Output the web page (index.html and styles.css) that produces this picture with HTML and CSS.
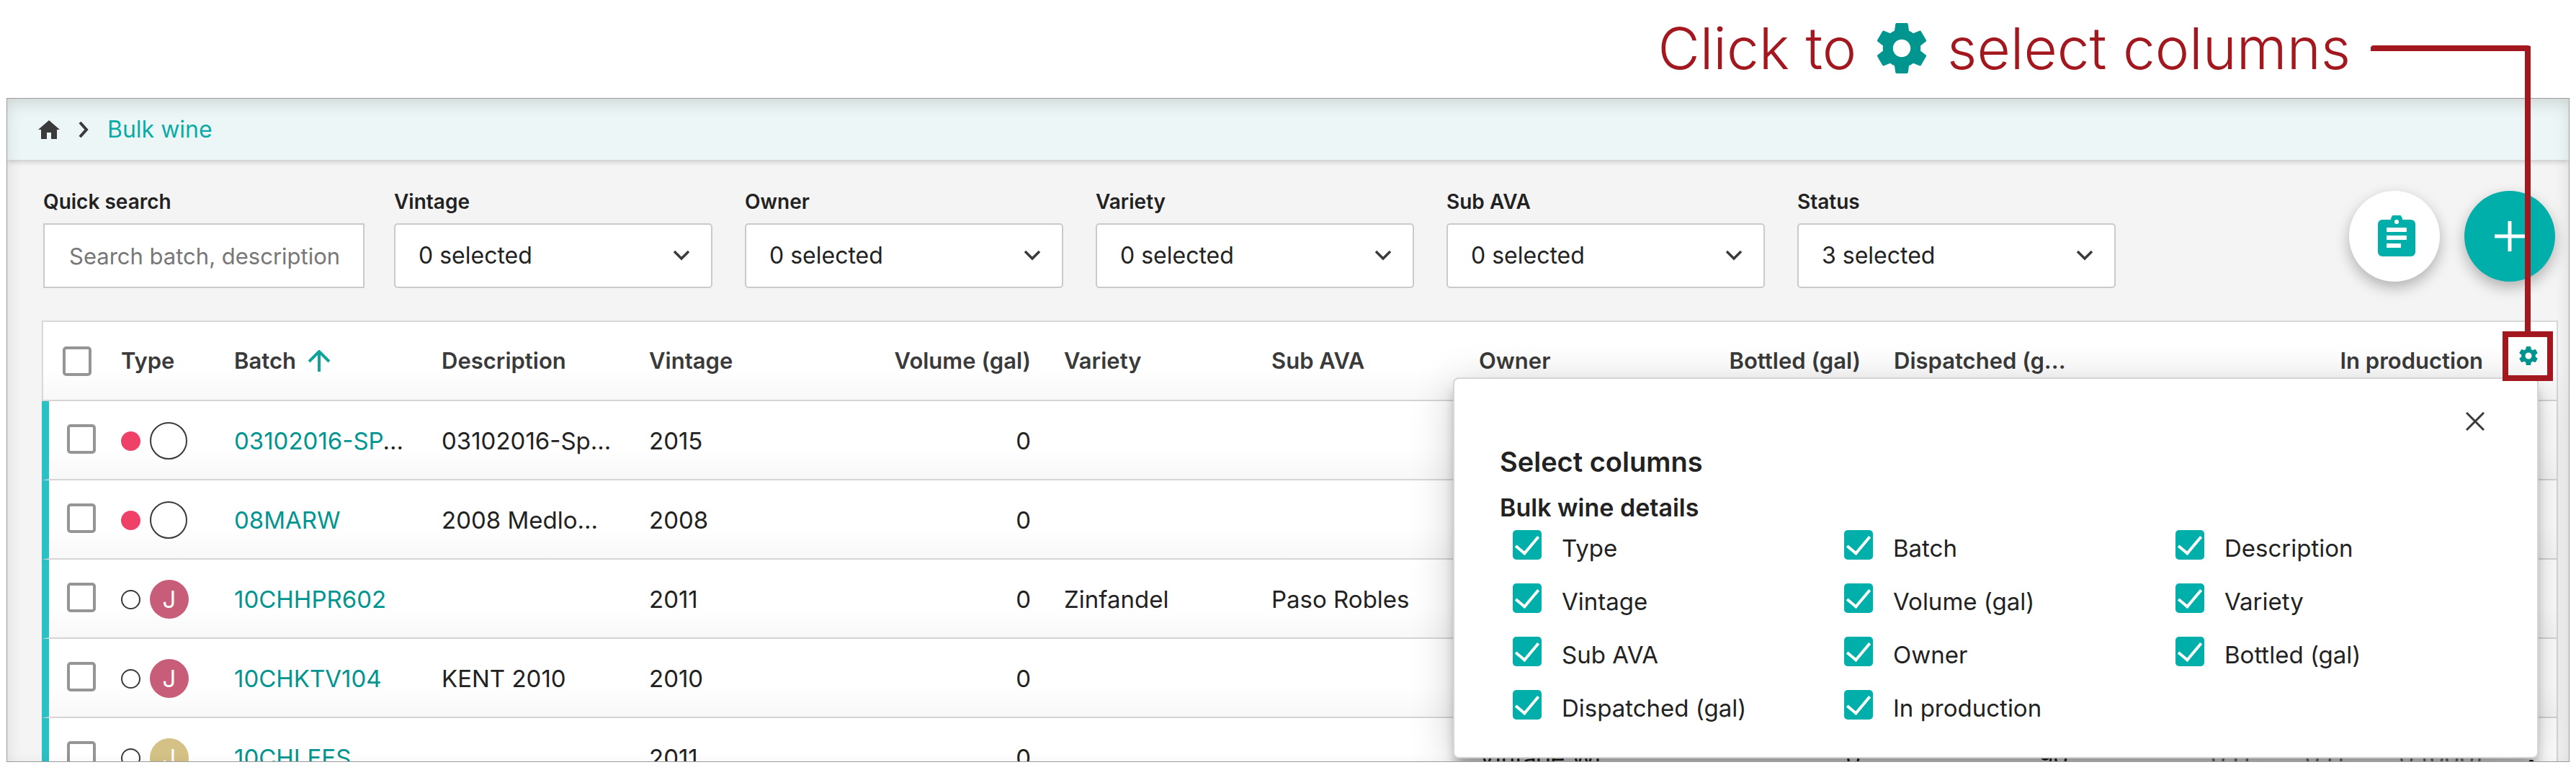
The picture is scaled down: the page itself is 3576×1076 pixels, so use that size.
FILE: index.html
```html
<!DOCTYPE html>
<html lang="en">
<head>
<meta charset="utf-8">
<title>Bulk wine</title>
<link rel="stylesheet" href="styles.css">
</head>
<body>
<svg class="defs" aria-hidden="true">
  <symbol id="gear" viewBox="2 2 20 20"><path d="M19.43 12.98c.04-.32.07-.64.07-.98s-.03-.66-.07-.98l2.11-1.65c.19-.15.24-.42.12-.64l-2-3.46c-.12-.22-.39-.3-.61-.22l-2.49 1c-.52-.4-1.08-.73-1.69-.98l-.38-2.65C14.46 2.18 14.25 2 14 2h-4c-.25 0-.46.18-.49.42l-.38 2.65c-.61.25-1.17.59-1.69.98l-2.49-1c-.23-.09-.49 0-.61.22l-2 3.46c-.13.22-.07.49.12.64l2.11 1.65c-.04.32-.07.65-.07.98s.03.66.07.98l-2.11 1.65c-.19.15-.24.42-.12.64l2 3.46c.12.22.39.3.61.22l2.49-1c.52.4 1.08.73 1.69.98l.38 2.65c.03.24.24.42.49.42h4c.25 0 .46-.18.49-.42l.38-2.65c.61-.25 1.17-.59 1.69-.98l2.49 1c.23.09.49 0 .61-.22l2-3.46c.12-.22.07-.49-.12-.64l-2.11-1.65zM12 15.5c-1.93 0-3.5-1.57-3.5-3.5s1.57-3.5 3.5-3.5 3.5 1.57 3.5 3.5-1.57 3.5-3.5 3.5z"/></symbol>
  <symbol id="down" viewBox="0 0 24 16"><path d="M2 2l10 10L22 2" fill="none" stroke="currentColor" stroke-width="3.5"/></symbol>
</svg>

<aside class="callout">
  <p class="callout-text">Click to <svg class="callout-gear" role="img" aria-label="settings"><use href="#gear"/></svg> select columns</p>
  <span class="callout-line"></span>
  <span class="callout-drop"></span>
  <span class="callout-box"></span>
</aside>

<main class="frame">
  <nav class="crumbs" aria-label="Breadcrumb">
    <a href="#" aria-label="Home"><svg width="30" height="26" viewBox="0 0 30 26"><path d="M15 0L0 13h4v13h8v-9h6v9h8V13h4z" fill="#3a3a3a"/></svg></a>
    <svg width="14" height="22" viewBox="0 0 14 22"><path d="M2 1l9 10-9 10" fill="none" stroke="#3a3a3a" stroke-width="4"/></svg>
    <a class="current" href="#">Bulk wine</a>
  </nav>

  <section class="filters">
    <div class="field search"><label for="q">Quick search</label><input id="q" type="text" placeholder="Search batch, description"></div>
    <div class="field"><label for="f1">Vintage</label><div class="pick"><select id="f1"><option>0 selected</option></select><svg><use href="#down"/></svg></div></div>
    <div class="field"><label for="f2">Owner</label><div class="pick"><select id="f2"><option>0 selected</option></select><svg><use href="#down"/></svg></div></div>
    <div class="field"><label for="f3">Variety</label><div class="pick"><select id="f3"><option>0 selected</option></select><svg><use href="#down"/></svg></div></div>
    <div class="field"><label for="f4">Sub AVA</label><div class="pick"><select id="f4"><option>0 selected</option></select><svg><use href="#down"/></svg></div></div>
    <div class="field"><label for="f5">Status</label><div class="pick"><select id="f5"><option>3 selected</option></select><svg><use href="#down"/></svg></div></div>
    <div class="actions">
      <button class="round light" type="button" aria-label="Tasks"><svg width="52" height="58" viewBox="0 0 52 58"><path fill="#00aeaa" fill-rule="evenodd" d="M6 6h12a8 8 0 0 1 16 0h12a6 6 0 0 1 6 6v39a6 6 0 0 1-6 6H6a6 6 0 0 1-6-6V12a6 6 0 0 1 6-6zM26 6a3 3 0 1 0 0 6 3 3 0 0 0 0-6zM12 17v6h28v-6zM12 28v6h28v-6zM12 39v6h20v-6z"/></svg></button>
      <button class="round teal" type="button" aria-label="Add"><svg width="44" height="44" viewBox="0 0 44 44"><path d="M22 1v42M1 22h42" stroke="#fff" stroke-width="5"/></svg></button>
    </div>
  </section>

  <section class="grid">
    <table>
      <colgroup><col class="c-check"><col class="c-type"><col class="c"><col class="c"><col class="c"><col class="c"><col class="c"><col class="c"><col class="c"><col class="c"><col class="c"><col class="c-prod"><col class="c-gear"></colgroup>
      <thead><tr>
        <th><input type="checkbox" aria-label="Select all"></th><th>Type</th>
        <th><span class="sort">Batch <svg width="32" height="30" viewBox="0 0 32 30"><path d="M16 30V3M2 16L16 2l14 14" fill="none" stroke="#0fa39b" stroke-width="4"/></svg></span></th>
        <th>Description</th><th>Vintage</th><th class="num">Volume (gal)</th><th>Variety</th><th>Sub AVA</th><th>Owner</th><th class="num">Bottled (gal)</th><th>Dispatched (g...</th><th class="num">In production</th>
        <th class="tool"><button type="button" aria-label="Select columns"><svg><use href="#gear"/></svg></button></th>
      </tr></thead>
      <tbody>
        <tr><td><input type="checkbox" aria-label="Select 03102016-SP"></td><td><span class="types"><i class="dot pink"></i><i class="ring"></i></span></td><td><a href="#">03102016-SP</a>...</td><td>03102016-Sp...</td><td>2015</td><td class="num">0</td><td></td><td></td><td></td><td></td><td></td><td></td><td></td></tr>
        <tr><td><input type="checkbox" aria-label="Select 08MARW"></td><td><span class="types"><i class="dot pink"></i><i class="ring"></i></span></td><td><a href="#">08MARW</a></td><td>2008 Medlo...</td><td>2008</td><td class="num">0</td><td></td><td></td><td></td><td></td><td></td><td></td><td></td></tr>
        <tr><td><input type="checkbox" aria-label="Select 10CHHPR602"></td><td><span class="types"><i class="dot"></i><b class="badge rose">J</b></span></td><td><a href="#">10CHHPR602</a></td><td></td><td>2011</td><td class="num">0</td><td>Zinfandel</td><td>Paso Robles</td><td></td><td></td><td></td><td></td><td></td></tr>
        <tr><td><input type="checkbox" aria-label="Select 10CHKTV104"></td><td><span class="types"><i class="dot"></i><b class="badge rose">J</b></span></td><td><a href="#">10CHKTV104</a></td><td>KENT 2010</td><td>2010</td><td class="num">0</td><td></td><td></td><td></td><td></td><td></td><td></td><td></td></tr>
        <tr><td><input type="checkbox" aria-label="Select 10CHLEES"></td><td><span class="types"><i class="dot"></i><b class="badge sand">J</b></span></td><td><a href="#">10CHLEES</a></td><td></td><td>2011</td><td class="num">0</td><td></td><td></td><td>Vintage Wi</td><td class="num">0</td><td class="num">90</td><td><span class="stages"><span>0 H</span><span>0 H</span><span>0 (000)</span></span></td><td class="tool"><svg class="more" viewBox="0 0 10 40"><circle cx="5" cy="5" r="4"/><circle cx="5" cy="20" r="4"/><circle cx="5" cy="35" r="4"/></svg></td></tr>
      </tbody>
    </table>

    <form class="panel">
      <button class="close" type="button" aria-label="Close"><svg width="26" height="26" viewBox="0 0 26 26"><path d="M1 1l24 24M25 1L1 25" stroke="#3a3a3a" stroke-width="3"/></svg></button>
      <h2>Select columns</h2>
      <fieldset>
        <legend>Bulk wine details</legend>
        <div class="options">
          <label><input type="checkbox" checked>Type</label><label><input type="checkbox" checked>Batch</label><label><input type="checkbox" checked>Description</label>
          <label><input type="checkbox" checked>Vintage</label><label><input type="checkbox" checked>Volume (gal)</label><label><input type="checkbox" checked>Variety</label>
          <label><input type="checkbox" checked>Sub AVA</label><label><input type="checkbox" checked>Owner</label><label><input type="checkbox" checked>Bottled (gal)</label>
          <label><input type="checkbox" checked>Dispatched (gal)</label><label><input type="checkbox" checked>In production</label>
        </div>
      </fieldset>
    </form>
  </section>
</main>
</body>
</html>
```
FILE: styles.css
```css
* { box-sizing: border-box; }

body {
  margin: 0;
  padding: 0 9px 18px;
  height: 100vh;
  display: flex;
  flex-direction: column;
  position: relative;
  background: #fff;
  color: #222;
  font: 32px/40px Inter, "Open Sans", sans-serif;
}

a { color: #009590; text-decoration: none; }
button { border: 0; padding: 0; background: none; font: inherit; cursor: pointer; }
svg { display: block; }
.defs { position: absolute; width: 0; height: 0; }

/* Annotation above the application */
.callout {
  flex: none;
  height: 136px;
  display: flex;
  justify-content: flex-end;
  align-items: center;
  gap: 28px;
  padding: 0 54px 2px 0;
  color: #a3181f;
}
.callout-text {
  margin: 0;
  display: flex;
  align-items: center;
  gap: 28px;
  font-size: 80px;
  line-height: 88px;
  font-weight: 300;
}
.callout-gear { width: 70px; height: 74px; fill: #00958f; }
.callout-line { width: 222px; height: 8px; border-radius: 4px 4px 0 0; background: #a3181f; }
.callout-drop { position: absolute; z-index: 3; right: 63px; top: 64px; width: 8px; height: 400px; background: #a3181f; }
.callout-box { position: absolute; z-index: 3; right: 32px; top: 460px; width: 70px; height: 69px; border: 8px solid #a3181f; pointer-events: none; }

/* Application window */
.frame {
  flex: 1;
  min-height: 0;
  overflow: hidden;
  position: relative;
  border: 1px solid #9c9c9c;
  background: #f4f4f4;
}
.frame::after {
  content: "";
  position: absolute;
  inset: 0;
  pointer-events: none;
  box-shadow: inset 0 8px 24px -4px rgba(0, 0, 0, .16);
}

.crumbs {
  height: 85px;
  display: flex;
  align-items: center;
  gap: 26px;
  padding: 0 43px;
  background: #edf6f6;
  box-shadow: 0 2px 8px rgba(0, 0, 0, .2);
  font-size: 32px;
}
.crumbs .current { color: #0aaba6; }

.filters {
  display: flex;
  align-items: flex-start;
  gap: 45px;
  padding: 38px 19px 45px 50px;
}
.field { flex: 0 1 442px; display: flex; flex-direction: column; gap: 10px; }
.field.search { flex-basis: 446px; margin-right: -4px; }
.field label { font-size: 28px; font-weight: 600; }
.field input, .field select {
  width: 100%;
  height: 90px;
  border: 2px solid #cacaca;
  background: #fff;
  color: #222;
  font: inherit;
}
.field input { padding: 0 34px; font-size: 31px; border-radius: 0; }
.field input::placeholder { color: #777; opacity: 1; }
.field select { padding: 0 32px; border-radius: 5px; appearance: none; }
.pick { position: relative; }
.pick svg { position: absolute; right: 31px; top: 37px; width: 24px; height: 16px; color: #3a3a3a; pointer-events: none; }

.actions { display: flex; gap: 34px; margin: 5px 0 0 auto; }
.round {
  width: 126px;
  height: 126px;
  border-radius: 50%;
  display: grid;
  place-items: center;
  box-shadow: 0 8px 20px rgba(0, 0, 0, .28);
}
.light { background: #fff; padding-left: 6px; }
.teal { background: #00aeaa; padding-right: 1px; }

/* Batch table */
.grid { position: relative; margin: 0 16px 0 48px; }
table { width: 100%; table-layout: fixed; border-collapse: separate; border-spacing: 0; border: 2px solid #d8d8d8; border-width: 2px 2px 0 0; background: #fff; }
.c-check { width: 110px; }
.c-type { width: 157px; }
.c { width: 288px; }
.c-prod { width: 576px; }
.c-gear { width: 56px; }
th, td {
  height: 110px;
  padding: 0 46px 0 0;
  border-bottom: 2px solid #d5d5d5;
  background: linear-gradient(#fff 60%, #f8f8f8);
  text-align: left;
  white-space: nowrap;
}
td { padding-top: 2px; font-size: 33px; }
th { font-size: 31px; font-weight: 600; color: #3a3a3a; }
th:first-child { padding-left: 27px; border-left: 2px solid #d8d8d8; }
td:first-child { padding-left: 25px; border-left: 10px solid #2bc0c4; }
th:nth-child(2), td:nth-child(2), td:first-child, th:first-child { padding-right: 0; }
.num { text-align: right; }
.sort { display: flex; align-items: center; gap: 16px; }
th.tool { padding: 0 0 8px 4px; }
td.tool { padding: 16px 0 0 16px; }
.tool button svg { width: 26px; height: 28px; fill: #00958f; }
.more { width: 10px; height: 40px; }
.stages { display: flex; justify-content: flex-end; gap: 76px; color: #777; }

input[type="checkbox"] {
  appearance: none;
  display: block;
  width: 40px;
  height: 41px;
  margin: 0;
  border: 4px solid #959595;
  border-radius: 5px;
  background: #fff;
}
td input[type="checkbox"] { margin-bottom: 6px; }

.types { display: flex; align-items: center; gap: 13px; }
.dot { width: 27px; height: 27px; border: 2px solid #3a3a3a; border-radius: 50%; }
.dot.pink { border: 0; background: #ef4068; }
.ring { width: 52px; height: 52px; border: 2px solid #3a3a3a; border-radius: 50%; }
.badge { width: 54px; height: 54px; border-radius: 50%; color: #fff; font-weight: 400; line-height: 54px; text-align: center; }
.rose { background: #c75d79; }
.sand { background: #d3c185; }

/* Column chooser */
.panel {
  position: absolute;
  top: 79px;
  right: 26px;
  width: 1507px;
  height: 529px;
  padding: 46px 63px;
  border: 2px solid #d5d5d5;
  border-radius: 8px;
  background: #fff;
  box-shadow: 0 14px 16px -4px rgba(0, 0, 0, .35), 0 10px 60px rgba(0, 0, 0, .2);
}
.close { display: block; margin: 0 10px 0 auto; }
.panel h2 { margin: 21px 0 22px; font-size: 38px; line-height: 44px; font-weight: 600; }
.panel fieldset { margin: 0; padding: 0; border: 0; }
.panel legend { padding: 0; font-size: 34px; font-weight: 600; }
.options {
  display: grid;
  grid-template-columns: repeat(3, 460px);
  grid-auto-rows: 41px;
  row-gap: 33px;
  padding: 11px 18px 0;
}
.options label { display: flex; gap: 28px; font-size: 33px; line-height: 50px; }
.options input[type="checkbox"] {
  border: 0;
  background: #00aeaa;
  display: grid;
  place-items: center;
}
.options input[type="checkbox"]::before {
  content: "";
  width: 14px;
  height: 28px;
  margin-top: -7px;
  border: solid #fff;
  border-width: 0 4px 4px 0;
  transform: rotate(40deg);
}
```
